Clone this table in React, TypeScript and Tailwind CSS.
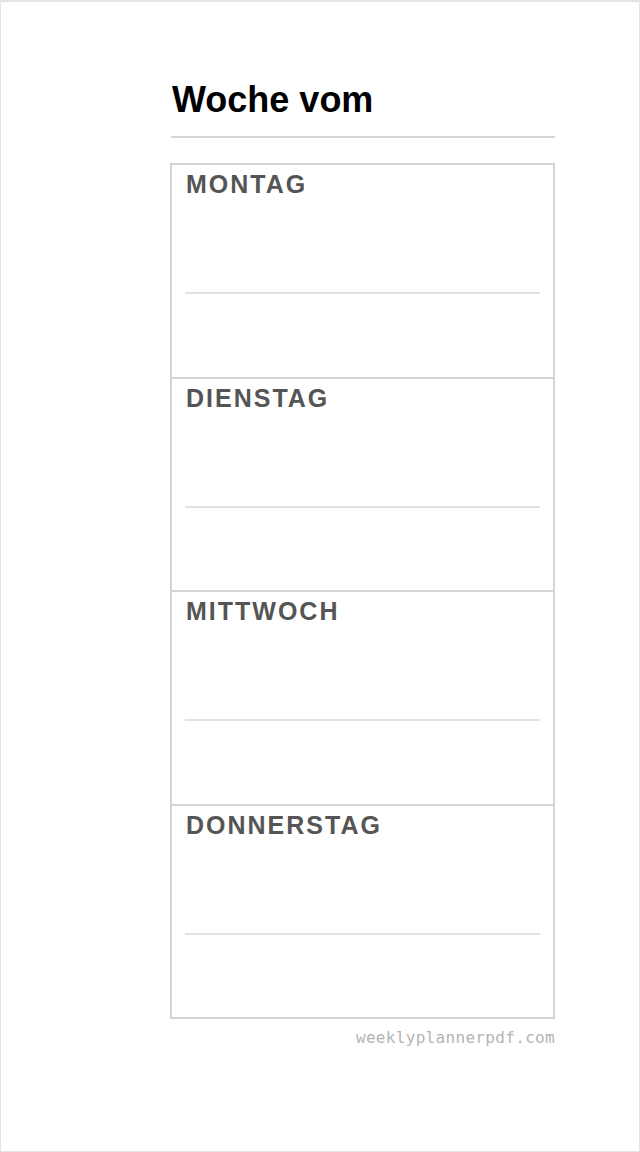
import React from 'react';

const days = ['MONTAG', 'DIENSTAG', 'MITTWOCH', 'DONNERSTAG'];

const App: React.FC = () => {
    return (
        <div className="w-[640px] h-[1152px] bg-white border border-t-2 border-[#e4e4e4] font-['Liberation_Sans',Arial,sans-serif]">
            <div className="pl-[169px] pt-[80px] w-[554px]">
                <h1 className="text-[36px] leading-none font-bold text-black pl-[2px]">Woche vom</h1>
                <div className="mt-[18px] ml-[1px] h-[2px] bg-[#d4d4d4]" />
                <div className="mt-[25px] border-2 border-[#d4d4d4] divide-y-2 divide-[#d4d4d4]">
                    {days.map(day => (
                        <div key={day}>
                            <div className="h-[211.5px] px-[13px]">
                                <div className="h-[127px] pt-[7px]">
                                    <span className="block text-[25px] leading-none font-bold text-[#555555] tracking-[0.08em] pl-[1px]">{day}</span>
                                </div>
                                <div className="h-[2px] bg-[#e2e2e2]" />
                            </div>
                        </div>
                    ))}
                </div>
                <p className="mt-[11px] text-right text-[16px] leading-none text-[#b4b4b4] font-['DejaVu_Sans_Mono',monospace] tracking-[0.02em]">
                    weeklyplannerpdf.com
                </p>
            </div>
        </div>
    );
};

export default App;
